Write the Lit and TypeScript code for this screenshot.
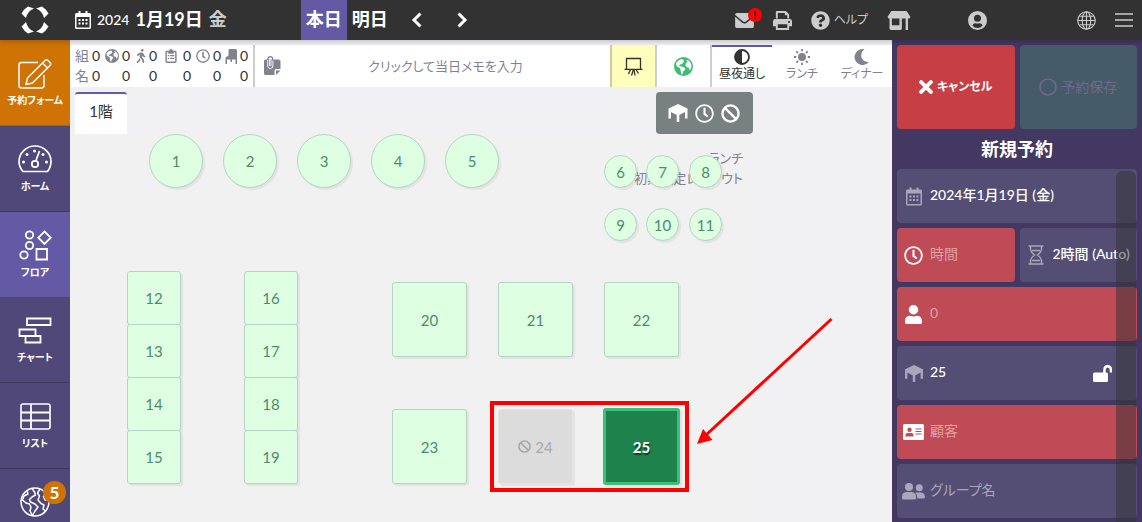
import { LitElement, html, css, svg, TemplateResult } from "lit";
import { customElement, property } from "lit/decorators.js";
import { classMap } from "lit/directives/class-map.js";
import { styleMap } from "lit/directives/style-map.js";

type Icon = { box: string; art: unknown };

const clockPath = "M256 8C119 8 8 119 8 256s111 248 248 248 248-111 248-248S393 8 256 8zm0 448c-110.500 0-200-89.500-200-200S145.500 56 256 56s200 89.500 200 200-89.500 200-200 200zm61.800-104.400l-84.900-61.700c-3.100-2.300-4.900-5.900-4.900-9.700V116c0-6.600 5.400-12 12-12h32c6.600 0 12 5.400 12 12v141.700l66.800 48.600c5.400 3.900 6.500 11.400 2.600 16.800L334.600 349c-3.900 5.300-11.400 6.500-16.800 2.600z";

const icons: Record<string, Icon> = {
  logo: {
    box: "0 0 28 28",
    art: svg`<g fill="currentColor">
      <path d="M7 .5 13 2.500Q6.500 5 5 12L.5 7.500Q3 3 7 .5z"/>
      <path d="M21 .5 15 2.500Q21.500 5 23 12L27.500 7.500Q25 3 21 .5z"/>
      <path d="M7 27.500 13 25.500Q6.500 23 5 16L.5 20.500Q3 25 7 27.500z"/>
      <path d="M21 27.500 15 25.500Q21.500 23 23 16L27.500 20.500Q25 25 21 27.500z"/></g>`,
  },
  calendar: {
    box: "0 0 16 18",
    art: svg`<path d="M3.500 0h2v2h5V0h2v2H14.500Q16 2 16 3.500V16.500Q16 18 14.500 18H1.500Q0 18 0 16.500V3.500Q0 2 1.500 2H3.500zM1.500 6V16.500H14.500V6z" fill="currentColor" fill-rule="evenodd"/>
      <path d="M3.500 8h2v2h-2zM7 8h2v2h-2zM10.500 8h2v2h-2zM3.500 11.500h2v2h-2zM7 11.500h2v2h-2zM10.500 11.500h2v2h-2z" fill="currentColor"/>`,
  },
  left: { box: "0 0 12 16", art: svg`<path d="M9.500 1.500 3 8l6.500 6.500" fill="none" stroke="currentColor" stroke-width="3"/>` },
  right: { box: "0 0 12 16", art: svg`<path d="M2.500 1.500 9 8l-6.500 6.500" fill="none" stroke="currentColor" stroke-width="3"/>` },
  mail: {
    box: "0 0 20 16",
    art: svg`<path d="M2 0H18Q20 0 20 2L11.500 9Q10 10 8.500 9L0 2Q0 0 2 0zM0 4 7.500 10.500Q10 12.200 12.500 10.500L20 4V14Q20 16 18 16H2Q0 16 0 14z" fill="currentColor"/>`,
  },
  print: {
    box: "0 0 20 20",
    art: svg`<path d="M3 8V1.500Q3 0 4.500 0H13.500L17 3.500V8H15V4.500H12.500V2H5V8z" fill="currentColor"/>
      <path d="M2.500 8.500H17.500Q20 8.500 20 11V16H17V20H3V16H0V11Q0 8.500 2.500 8.500zM5 14V18H15V14zM16 10.500v2h1.800v-2z" fill="currentColor" fill-rule="evenodd"/>`,
  },
  help: {
    box: "0 0 512 512",
    art: svg`<path fill="currentColor" d="M504 256c0 136.997-111.043 248-248 248S8 392.997 8 256C8 119.083 119.043 8 256 8s248 111.083 248 248zM262.655 90c-54.497 0-89.255 22.957-116.549 63.758-3.536 5.286-2.353 12.415 2.715 16.258l34.699 26.310c5.205 3.947 12.621 3.008 16.665-2.122 17.864-22.658 30.113-35.797 57.303-35.797 20.429 0 45.698 13.148 45.698 32.958 0 14.976-12.363 22.667-32.534 33.976C247.128 238.528 216 254.941 216 296v4c0 6.627 5.373 12 12 12h56c6.627 0 12-5.373 12-12v-1.333c0-28.462 83.186-29.647 83.186-106.667 0-58.002-60.165-102-116.531-102zM256 338c-25.365 0-46 20.635-46 46 0 25.364 20.635 46 46 46s46-20.636 46-46c0-25.365-20.635-46-46-46z"/>`,
  },
  store: {
    box: "0 0 24 20",
    art: svg`<path d="M4 0H20L24 6Q24 8 22 8H2Q0 8 0 6zM2 8H4.500V15H12.500V8H15V18.500Q15 20 13.500 20H3.500Q2 20 2 18.500zM19 8H21.500V20H19z" fill="currentColor"/>`,
  },
  account: {
    box: "0 0 20 20",
    art: svg`<path d="M10 0A10 10 0 1 1 10 20A10 10 0 0 1 10 0zM10 4A3.700 3.700 0 1 0 10 11.400A3.700 3.700 0 0 0 10 4zM4.500 15.200Q7 18 10 18T15.500 15.200Q14 12.500 12 12.800 10 13.700 8 12.800 6 12.500 4.500 15.200z" fill="currentColor" fill-rule="evenodd"/>`,
  },
  world: {
    box: "0 0 20 20",
    art: svg`<g fill="none" stroke="currentColor" stroke-width="1.200"><circle cx="10" cy="10" r="9.200"/><ellipse cx="10" cy="10" rx="4.500" ry="9.200"/><path d="M10 1V19M1 10H19M2.500 5.500H17.500M2.500 14.500H17.500"/></g>`,
  },
  menu: { box: "0 0 18 16", art: svg`<path d="M0 2H18M0 8H18M0 14H18" stroke="currentColor" stroke-width="1.600"/>` },
  globe: {
    box: "0 0 20 20",
    art: svg`<path fill="currentColor" fill-rule="evenodd" d="M10 0A10 10 0 1 1 10 20A10 10 0 0 1 10 0zM2 6.500 3 10 6.500 11.500 7 15 8 18.300 9 18 9.500 15.500 12 13 11 11 8 10 5.500 9.500 6 8 8 7.500 10.500 5 10 3 8 2 5 3.500zM12.500 3.500 14.500 5 12.500 6.500 12 9 14 11 16 11.500 16 14 17.500 13 18.500 10 18 7 15.500 3.500z"/>`,
  },
  walk: {
    box: "0 0 320 512",
    art: svg`<path fill="currentColor" d="M208 96c26.500 0 48-21.500 48-48S234.500 0 208 0s-48 21.500-48 48 21.500 48 48 48zm94.500 149.100l-23.300-11.800-9.700-29.400c-14.700-44.600-55.700-75.800-102.200-75.900-36-.1-55.900 10.100-93.300 25.200-21.600 8.700-39.300 25.200-49.700 46.200L17.600 213c-7.800 15.800-1.500 35 14.200 42.900 15.600 7.900 34.600 1.500 42.500-14.300L81 228c3.500-7 9.300-12.500 16.500-15.400l26.800-10.800-15.200 60.700c-5.200 20.800.4 42.900 14.900 58.800l59.900 65.400c7.200 7.900 12.300 17.400 14.900 27.700l18.300 73.300c4.300 17.100 21.700 27.600 38.800 23.300 17.100-4.300 27.600-21.700 23.300-38.800l-22.200-89c-2.600-10.300-7.700-19.900-14.900-27.700l-45.500-49.700 17.200-68.700 5.500 16.500c5.300 16.100 16.700 29.400 31.700 37l23.300 11.800c15.600 7.900 34.600 1.500 42.500-14.300 7.700-15.700 1.400-35.100-14.300-43zM73.600 385.800c-3.200 8.100-8 15.400-14.200 21.500l-50 50.100c-12.500 12.500-12.500 32.800 0 45.300s32.700 12.500 45.200 0l59.400-59.400c6.100-6.100 10.900-13.400 14.200-21.500l13.500-33.800c-55.300-60.300-38.700-41.800-47.400-53.700l-20.700 51.500z"/>`,
  },
  clipboard: {
    box: "0 0 12 15",
    art: svg`<path d="M1.500 2H4Q4 0 6 0T8 2H10.500Q12 2 12 3.500V13.500Q12 15 10.500 15H1.500Q0 15 0 13.500V3.500Q0 2 1.500 2zM1.500 3.500V13.500H10.500V3.500H9V5H3V3.500z" fill="currentColor" fill-rule="evenodd"/><path d="M2.500 6.500h1.500v1.300h-1.500zM5 6.500h4.500v1.300h-4.500zM2.500 9.500h1.500v1.300h-1.500zM5 9.500h4.500v1.300h-4.500z" fill="currentColor"/>`,
  },
  clock: { box: "0 0 512 512", art: svg`<path fill="currentColor" d="${clockPath}"/>` },
  chair: {
    box: "0 0 12 15",
    art: svg`<path d="M4.500 0H10.500Q12 0 12 1.500V15H10.500V10.500H7V13H5.500V10.500H2V15H.5V8.500L3.500 6.500V1Q3.500 0 4.500 0z" fill="currentColor"/>`,
  },
  memo: {
    box: "0 0 17 20",
    art: svg`<path d="M1.500 3.500H14.500Q16.500 3.500 16.500 5V13H12Q10.500 13 10.500 14.500V19H1.500Q0 19 0 17.500V5Q0 3.500 1.500 3.500zM12 14.500H16.500L12 19z" fill="currentColor"/>
      <path d="M4 4V3Q4 .7 6.300 .7T8.600 3V4" fill="none" stroke="currentColor" stroke-width="1.300"/>
      <path d="M3.700 4V10Q3.700 12.500 6.300 12.500T8.900 10V4.500M5.600 10V4Q5.600 3 6.300 3T7 4V10" fill="none" stroke="#fff" stroke-width=".9"/>`,
  },
  board: {
    box: "0 0 19 19",
    art: svg`<path d="M2.500 12V1.500H16.500V12M.5 12.300H18.500M6.500 12.500 4.500 17M9.500 12.500 7.500 18.500M10 12.500 11 18.500M12 12.500 14.500 16.500" fill="none" stroke="currentColor" stroke-width="1.300"/>`,
  },
  adjust: {
    box: "0 0 16 16",
    art: svg`<circle cx="8" cy="8" r="7" fill="none" stroke="currentColor" stroke-width="1.800"/><path d="M8 1A7 7 0 0 0 8 15z" fill="currentColor"/>`,
  },
  sun: {
    box: "0 0 16 16",
    art: svg`<circle cx="8" cy="8" r="4" fill="currentColor"/><path d="M8 0V2.200M8 13.800V16M0 8H2.200M13.800 8H16M2.300 2.300 4 4M12 12 13.700 13.700M2.300 13.700 4 12M12 4 13.700 2.300" stroke="currentColor" stroke-width="1.800"/>`,
  },
  moon: {
    box: "0 0 16 16",
    art: svg`<path d="M10.500 .3A8 8 0 1 0 15 12.800Q9.500 13.500 7.500 8.500 6.500 3 10.500 .3z" fill="currentColor"/>`,
  },
  table: {
    box: "0 0 20 18",
    art: svg`<path d="M10 0 19.500 4.500V14.500H17V8L11.300 11V18H8.700V11L3 8V14.500H.5V4.500z" fill="currentColor"/>`,
  },
  ban: {
    box: "0 0 20 20",
    art: svg`<circle cx="10" cy="10" r="8.500" fill="none" stroke="currentColor" stroke-width="2.500"/><path d="M4 4 16 16" stroke="currentColor" stroke-width="2.500"/>`,
  },
  times: {
    box: "0 80 352 352",
    art: svg`<path fill="currentColor" d="M242.720 256l100.070-100.070c12.280-12.280 12.280-32.190 0-44.480l-22.240-22.240c-12.280-12.280-32.190-12.280-44.480 0L176 189.280 75.930 89.210c-12.280-12.280-32.190-12.280-44.480 0L9.210 111.450c-12.280 12.280-12.280 32.190 0 44.480L109.280 256 9.210 356.070c-12.280 12.280-12.280 32.190 0 44.480l22.240 22.240c12.280 12.280 32.200 12.280 44.480 0L176 322.720l100.070 100.070c12.280 12.280 32.200 12.280 44.480 0l22.240-22.240c12.280-12.280 12.280-32.190 0-44.480L242.720 256z"/>`,
  },
  ring: { box: "0 0 18 18", art: svg`<circle cx="9" cy="9" r="8" fill="none" stroke="currentColor" stroke-width="1.600"/>` },
  hourglass: {
    box: "0 0 16 20",
    art: svg`<path d="M.5 1H15.500M.5 19H15.500M2.500 1V4.500Q3 7.500 6.500 10 3 12.500 2.500 15.500V19M13.500 1V4.500Q13 7.500 9.500 10 13 12.500 13.500 15.500V19M4 5.500H12M4 15.500H12" fill="none" stroke="currentColor" stroke-width="1.500"/>`,
  },
  user: {
    box: "0 0 16 18",
    art: svg`<circle cx="8" cy="4.500" r="4.500" fill="currentColor"/><path d="M4.500 10.200Q8 11.500 11.500 10.200 16 10.500 16 15V16.500Q16 18 14.500 18H1.500Q0 18 0 16.500V15Q0 10.500 4.500 10.200z" fill="currentColor"/>`,
  },
  unlock: {
    box: "0 0 19 17",
    art: svg`<path d="M1.500 7.500H10.200V5Q10.200 0 14.700 0T19 5V7.500H16.700V5Q16.700 2.500 14.700 2.500T12.700 5V7.500H13.500Q15 7.500 15 9V15.500Q15 17 13.500 17H1.500Q0 17 0 15.500V9Q0 7.500 1.500 7.500z" fill="currentColor"/>`,
  },
  card: {
    box: "0 0 21 16",
    art: svg`<path d="M1.500 0H19.500Q21 0 21 1.500V14.500Q21 16 19.500 16H1.500Q0 16 0 14.500V1.500Q0 0 1.500 0zM6.500 3.500A2.200 2.200 0 1 0 6.500 7.900A2.200 2.200 0 0 0 6.500 3.500zM2.500 12.500H10.500V11Q10.500 9 8.500 9H4.500Q2.500 9 2.500 11zM12.500 4.500V5.500H18.500V4.500zM12.500 7V8H18.500V7zM12.500 9.500V10.500H18.500V9.500z" fill="currentColor" fill-rule="evenodd"/>`,
  },
  users: {
    box: "0 0 23 17",
    art: svg`<circle cx="7" cy="4" r="4" fill="currentColor"/><circle cx="17.300" cy="4.700" r="3.500" fill="currentColor"/><path d="M4 9H10Q14 9.500 14 13.500V15.500Q14 16.500 13 16.500H1Q0 16.500 0 15.500V13.500Q0 9.500 4 9zM14 9.500H19Q23 10 23 14.500L22 15.500H15.300Q15.500 11.500 13.500 10z" fill="currentColor"/>`,
  },
  edit: {
    box: "0 0 34 31",
    art: svg`<g fill="none" stroke="currentColor" stroke-width="1.500" stroke-linejoin="round"><path d="M20 4.500H3.500Q1 4.500 1 7V27.500Q1 30 3.500 30H23.500Q26 30 26 27.500V17"/><path d="M9.500 20 27 2.500Q28.500 1 30 2.500L32 4.500Q33.500 6 32 7.500L14.500 25 8 26.500zM24.500 5 29.500 10"/></g>`,
  },
  gauge: {
    box: "0 0 34 28",
    art: svg`<path d="M5 26.500Q1 22 1 16.500A16 15.500 0 0 1 33 16.500Q33 22 29.500 26.500z" fill="none" stroke="currentColor" stroke-width="1.700"/><circle cx="17" cy="19" r="3.200" fill="none" stroke="currentColor" stroke-width="1.800"/><path d="M18 15.500 21.500 6" stroke="currentColor" stroke-width="1.700"/><g fill="currentColor"><circle cx="5.500" cy="17" r="1.500"/><circle cx="9" cy="9.500" r="1.500"/><circle cx="16.500" cy="6" r="1.500"/><circle cx="25" cy="9.500" r="1.500"/><circle cx="28.500" cy="17" r="1.500"/></g>`,
  },
  floor: {
    box: "0 0 33 31",
    art: svg`<g fill="none" stroke="currentColor" stroke-width="1.800"><circle cx="10.500" cy="5" r="3.700"/><circle cx="10.500" cy="15.500" r="3.700"/><circle cx="5" cy="25" r="3.700"/><path d="M25.500 1.500 31.700 7.700 25.500 13.900 19.300 7.700zM17.500 19H28V29.500H17.500z"/></g>`,
  },
  chart: {
    box: "0 0 34 27",
    art: svg`<path d="M9 1.500H32.500V8H9zM1.500 12.500H17.500V19H1.500zM7.500 19H22.500V25.500H7.500z" fill="none" stroke="currentColor" stroke-width="1.800"/>`,
  },
  list: {
    box: "0 0 31 27",
    art: svg`<rect x="1" y="1" width="29" height="25" rx="2" fill="none" stroke="currentColor" stroke-width="1.600"/><path d="M1 9.500H30M1 17.500H30M11 1V26" stroke="currentColor" stroke-width="1.800"/>`,
  },
  earth: {
    box: "0 0 30 30",
    art: svg`<g fill="none" stroke="currentColor" stroke-width="1.500" stroke-linejoin="round"><circle cx="15" cy="15" r="14"/><path d="M7 4 8 7 4 9 2.500 13 6 16 9.500 17 11 20 10 24 12.500 28.500 15 24 18 20 15 17 10.500 15 9.500 12.500 12 10 15.500 8 14.500 5 12 1.500M20 2 17.500 6 19.500 9 18 13 21 16.500 24 18 23 22 25.500 24M26 6.500 23.500 9.500 25 13 28.500 13"/></g>`,
  },
};

const icon = (name: string, width: number, height = width): TemplateResult =>
  html`<svg width=${width} height=${height} viewBox=${icons[name].box} aria-hidden="true">${icons[name].art}</svg>`;

const shared = css`
  * { box-sizing: border-box; }
  svg { display: block; flex: none; }
  button, input {
    font: inherit; color: inherit; background: none; border: 0; padding: 0; margin: 0;
    font-feature-settings: inherit; min-width: 0;
  }
  button { cursor: pointer; }
  a { color: inherit; text-decoration: none; }
`;

@customElement("top-bar")
class TopBar extends LitElement {
  static styles = [shared, css`
    :host {
      display: flex; align-items: stretch; height: 40px; background: #323232; color: #fff; padding-right: 9px;
      box-shadow: 0 1px 6px rgba(0, 0, 0, 0.25); position: relative; z-index: 2;
    }
    .group { display: flex; align-items: center; }
    .logo { width: 70px; justify-content: center; }
    .date { gap: 6px; padding-left: 5px; }
    .year { font-size: 14px; font-weight: 500; }
    .day { font-size: 18px; font-weight: 700; }
    .week { font-size: 18px; font-weight: 700; color: #ccc; }
    .jump { font-size: 18px; font-weight: 700; width: 46px; font-feature-settings: normal; }
    .jump.on { background: #6459a5; }
    .days { margin-left: 74px; align-items: stretch; }
    .arrow { width: 45px; display: grid; place-items: center; }
    .arrows { margin-left: 2px; }
    .tools { margin-left: auto; color: #ccc; gap: 19px; }
    .mail { position: relative; }
    .alert {
      position: absolute; right: -8px; top: -5px; width: 14px; height: 14px; border-radius: 50%;
      background: #f00; color: #323232; font-size: 12px; font-weight: 900; line-height: 14px; text-align: center;
    }
    .help { gap: 4px; font-size: 12px; }
    .account { margin-left: 38px; }
    .world { margin-left: 71px; }
  `];

  render() {
    return html`
      <a class="group logo" href="#" aria-label="トップ">${icon("logo", 28)}</a>
      <button class="group date">
        ${icon("calendar", 16, 18)}
        <span class="year">2024</span><span class="day">1月19日</span><span class="week">金</span>
      </button>
      <div class="group days">
        <button class="jump on">本日</button><button class="jump">明日</button>
      </div>
      <div class="group arrows">
        <button class="arrow" aria-label="前日">${icon("left", 12, 16)}</button>
        <button class="arrow" aria-label="翌日">${icon("right", 12, 16)}</button>
      </div>
      <div class="group tools">
        <button class="mail" aria-label="メール">${icon("mail", 19, 15)}<span class="alert">!</span></button>
        <button aria-label="印刷">${icon("print", 19)}</button>
        <button class="group help">${icon("help", 19)}<span>ヘルプ</span></button>
        <button aria-label="店舗">${icon("store", 24, 19)}</button>
        <button class="account" aria-label="アカウント">${icon("account", 19)}</button>
        <button class="world" aria-label="言語">${icon("world", 19)}</button>
        <button class="menu" aria-label="メニュー">${icon("menu", 18, 16)}</button>
      </div>`;
  }
}

@customElement("side-nav")
class SideNav extends LitElement {
  static styles = [shared, css`
    :host { display: block; background: #504878; color: #fff; overflow: hidden; }
    .item {
      display: flex; flex-direction: column; align-items: center; height: 86px; padding-top: 15px;
      border-bottom: 1px solid #403860; font-size: 10px; line-height: 18px; font-weight: 700;
      position: relative;
    }
    .art { height: 36px; display: flex; align-items: center; }
    .form { background: #cf7305; border-bottom-color: #b06010; }
    .on { background: #6459a5; height: 85px; border-bottom: 0; }
    .badge {
      position: absolute; left: 43px; top: 12px; width: 23px; height: 23px; border-radius: 50%;
      background: #cf7305; font-size: 17px; line-height: 23px; text-align: center;
    }
  `];

  render() {
    const items = [
      { name: "予約フォーム", art: icon("edit", 34, 31), kind: "form" },
      { name: "ホーム", art: icon("gauge", 34, 28), kind: "" },
      { name: "フロア", art: icon("floor", 33, 31), kind: "on" },
      { name: "チャート", art: icon("chart", 34, 27), kind: "" },
      { name: "リスト", art: icon("list", 31, 27), kind: "" },
    ];
    return html`<nav>
      ${items.map((i) => html`<a href="#" class="item ${i.kind}"><span class="art">${i.art}</span>${i.name}</a>`)}
      <a href="#" class="item" aria-label="ネット予約"><span class="art">${icon("earth", 30)}</span><span class="badge">5</span></a>
    </nav>`;
  }
}

@customElement("day-bar")
class DayBar extends LitElement {
  static styles = [shared, css`
    :host { display: flex; height: 42px; background: #fff; color: #323232; }
    table { border-collapse: collapse; table-layout: fixed; width: 178px; margin: 1px 0; }
    th, td { padding: 0; height: 20px; text-align: right; font-size: 14px; line-height: 20px; font-weight: 400; }
    .first { width: 30px; }
    .narrow { width: 27px; }
    .wide { width: 34px; }
    .cell { display: flex; justify-content: flex-end; align-items: center; gap: 3px; }
    .wide .cell { gap: 6px; }
    .cell svg, .unit { color: #82828f; }
    .memo {
      flex: 1; display: flex; align-items: center; padding-left: 9px; margin-left: 5px;
      border-left: 2px solid #ccccd2; color: #82828f; min-width: 0;
    }
    .memo input { flex: 1; text-align: center; font-size: 13px; outline: 0; }
    .memo input::placeholder { color: #82828f; opacity: 1; }
    .board { width: 47px; display: grid; place-items: center; background: #ffffbb; border: solid #cccca0; border-width: 0 2px; border-right-color: #ccccd2; }
    .net { width: 55px; display: grid; place-items: center; color: #3cbc74; border-right: 2px solid #ccccd2; }
    .shift {
      width: 60px; display: flex; flex-direction: column; align-items: center; gap: 1px;
      border-top: 2px solid transparent; padding-top: 2px; font-size: 12px; line-height: 16px; color: #82828f;
    }
    .on { border-top-color: #6459a5; color: #323232; }
  `];

  render() {
    const cols = [icon("globe", 14), icon("walk", 10, 14), icon("clipboard", 12, 14), icon("clock", 14), icon("chair", 12, 15)];
    const kinds = ["first", "narrow", "wide", "first", "narrow"];
    return html`
      <table>
        <tr>
          <th class="first"><span class="cell"><span class="unit">組</span>0</span></th>
          ${cols.map((c, i) => html`<td class=${kinds[i]}><span class="cell">${c}0</span></td>`)}
        </tr>
        <tr>
          <th><span class="cell"><span class="unit">名</span>0</span></th>
          ${cols.map(() => html`<td>0</td>`)}
        </tr>
      </table>
      <label class="memo">${icon("memo", 17, 20)}
        <input aria-label="当日メモ" placeholder="クリックして当日メモを入力" />
      </label>
      <button class="board" aria-label="ボード">${icon("board", 19)}</button>
      <button class="net" aria-label="ネット">${icon("globe", 19)}</button>
      <button class="shift on">${icon("adjust", 16)}昼夜通し</button>
      <button class="shift">${icon("sun", 16)}ランチ</button>
      <button class="shift">${icon("moon", 16)}ディナー</button>`;
  }
}

type Seat = { no: number; x: number; y: number; size: number; shape: "round" | "box"; state?: "blocked" | "picked" };

const seats: Seat[] = [
  ...[1, 2, 3, 4, 5].map((no, i): Seat => ({ no, x: 79 + i * 74, y: 0, size: 54, shape: "round" })),
  ...[6, 7, 8, 9, 10, 11].map((no, i): Seat => ({
    no, x: [534, 576, 619][i % 3], y: i < 3 ? 21 : 74, size: 33, shape: "round",
  })),
  ...[12, 13, 14, 15, 16, 17, 18, 19].map((no, i): Seat => ({
    no, x: i < 4 ? 57 : 174, y: 137 + (i % 4) * 53, size: 54, shape: "box",
  })),
  ...[20, 21, 22].map((no, i): Seat => ({ no, x: 322 + i * 106, y: 148, size: 75, shape: "box" })),
  { no: 23, x: 322, y: 275, size: 75, shape: "box" },
  { no: 24, x: 428, y: 275, size: 75, shape: "box", state: "blocked" },
  { no: 25, x: 533, y: 274, size: 77, shape: "box", state: "picked" },
];

@customElement("floor-map")
class FloorMap extends LitElement {
  static styles = [shared, css`
    :host { display: flex; flex-direction: column; flex: 1; min-height: 0; }
    .head { display: flex; justify-content: space-between; padding: 5px 139px 0 5px; }
    .tab {
      width: 52px; height: 42px; background: #fff; border-top: 2px solid #6459a5; border-radius: 3px 3px 0 0;
      padding-bottom: 4px; font-size: 15px; color: #323232;
    }
    .legend {
      display: flex; align-items: center; gap: 7px; padding: 0 13px 0 12px; height: 42px; border-radius: 4px;
      background: #788080; color: #fff;
    }
    .map { position: relative; flex: 1; background: linear-gradient(#f1f1f1, #f1f1f1) no-repeat; background-size: 683px 100%; overflow: hidden; }
    .note { margin: 0; padding: 14px 149px 0 0; text-align: right; font-size: 13px; line-height: 20px; color: #82828f; }
    .seat {
      position: absolute; display: flex; align-items: center; justify-content: center; gap: 4px;
      background: #dfffe2; border: 1px solid #b4d5c3; border-radius: 3px; color: #4d8c6b;
      font-size: 15px; line-height: 20px; box-shadow: 2px 2px 1px rgba(0, 0, 0, 0.06);
    }
    .round { border-radius: 50%; }
    .blocked { background: #dcdcdc; border-color: #e4e4e4; color: #a8a8a8; }
    .picked {
      background: #1d824c; border: 3px solid #3dbf79; color: #fff; font-weight: 700;
      text-shadow: 1px 2px 1px rgba(0, 0, 0, 0.5);
    }
    .frame { position: absolute; left: 420px; top: 267px; width: 199px; height: 91px; border: 4px solid #f00; pointer-events: none; }
    .pointer { position: absolute; left: 626px; top: 183px; pointer-events: none; }
  `];

  render() {
    return html`
      <div class="head">
        <button class="tab">1階</button>
        <div class="legend">${icon("table", 20, 18)}${icon("clock", 19)}${icon("ban", 19)}</div>
      </div>
      <div class="map">
        <p class="note">ランチ<br />初期設定レイアウト</p>
        ${seats.map((s) => html`<button
          class="seat ${classMap({ round: s.shape === "round", blocked: s.state === "blocked", picked: s.state === "picked" })}"
          style=${styleMap({ left: `${s.x}px`, top: `${s.y}px`, width: `${s.size}px`, height: `${s.size}px` })}
        >${s.state === "blocked" ? icon("ban", 13) : ""}${s.no}</button>`)}
        <div class="frame"></div>
        <svg class="pointer" width="138" height="128" viewBox="0 0 138 128" aria-hidden="true">
          <path d="M10 118 135.500 2" stroke="#f00" stroke-width="3" />
          <path d="M1 127 7 112 16.500 123z" fill="#f00" />
        </svg>
      </div>`;
  }
}

@customElement("form-field")
class FormField extends LitElement {
  @property() icon = "";
  @property() label = "";
  @property() value = "";
  @property() hint = "";
  @property({ type: Number }) w = 18;
  @property({ type: Number }) h = 18;
  @property({ type: Boolean }) required = false;
  @property({ type: Boolean }) lock = false;

  static styles = [shared, css`
    :host { display: block; min-width: 0; }
    .field {
      display: grid; grid-template-columns: 33px 1fr auto; align-items: center; height: 54px;
      border-radius: 4px; background: #544e75; color: #fff; overflow: hidden;
    }
    .required { background: #be4b56; }
    .pic { display: grid; place-items: center; color: #aaa6bb; }
    .required .pic { color: #fff; }
    input { width: 100%; height: 24px; padding-bottom: 4px; font-size: 14px; font-weight: 500; outline: 0; }
    input::placeholder { color: #aaa6bb; opacity: 1; font-weight: 400; }
    .required input::placeholder { color: #e2a0a5; }
    .lock { margin-right: 25px; }
  `];

  render() {
    return html`<div class="field ${classMap({ required: this.required })}">
      <label class="pic" for="box" aria-label=${this.label}>${icon(this.icon, this.w, this.h)}</label>
      <input id="box" .value=${this.value} placeholder=${this.hint} />
      ${this.lock ? html`<button class="lock" aria-label="ロック解除">${icon("unlock", 19, 17)}</button>` : ""}
    </div>`;
  }
}

@customElement("booking-panel")
class BookingPanel extends LitElement {
  static styles = [shared, css`
    :host { display: flex; flex-direction: column; background: #433862; color: #fff; padding: 5px 5px 0; overflow: hidden; }
    .pair { display: grid; grid-template-columns: 1fr 1fr; gap: 5px; }
    .action {
      display: flex; align-items: center; justify-content: center; gap: 4px; height: 84px;
      border-radius: 4px; font-size: 14px; font-weight: 700;
    }
    .cancel { background: #c73e45; font-size: 12px; }
    .save { background: #455b69; color: #71688c; font-weight: 400; }
    h1 { margin: 0; font-size: 18px; line-height: 40px; font-weight: 700; text-align: center; }
    .fields { display: flex; flex-direction: column; gap: 5px; position: relative; flex: 1; min-height: 0; }
    .thumb { position: absolute; right: 1px; top: 2px; bottom: 0; width: 20px; border-radius: 6px 6px 0 0; background: rgba(50, 50, 50, 0.5); }
  `];

  render() {
    return html`
      <div class="pair">
        <button class="action cancel">${icon("times", 14)}キャンセル</button>
        <button class="action save" disabled>${icon("ring", 18)}予約保存</button>
      </div>
      <h1>新規予約</h1>
      <div class="fields">
        <form-field icon="calendar" w="16" h="19" label="日付" value="2024年1月19日 (金)"></form-field>
        <div class="pair">
          <form-field icon="clock" w="19" h="19" label="時間" hint="時間" required></form-field>
          <form-field icon="hourglass" w="16" h="20" label="滞在時間" value="2時間 (Auto)"></form-field>
        </div>
        <form-field icon="user" w="17" h="19" label="人数" hint="0" required></form-field>
        <form-field icon="table" w="20" h="17" label="テーブル" value="25" lock></form-field>
        <form-field icon="card" w="21" h="16" label="顧客" hint="顧客" required></form-field>
        <form-field icon="users" w="23" h="17" label="グループ名" hint="グループ名"></form-field>
        <div class="thumb"></div>
      </div>`;
  }
}

@customElement("app-root")
class AppRoot extends LitElement {
  static styles = [shared, css`
    :host {
      display: grid; grid-template-rows: auto minmax(0, 1fr); height: 100vh; background: #f1f1f4; overflow: hidden;
      font-family: Lato, "Noto Sans CJK JP", sans-serif; font-feature-settings: "palt"; line-height: 1.3;
    }
    .body { display: grid; grid-template-columns: 70px minmax(0, 1fr) 250px; min-height: 0; }
    main { display: flex; flex-direction: column; padding-top: 5px; min-height: 0; }
  `];

  render() {
    return html`
      <top-bar></top-bar>
      <div class="body">
        <side-nav></side-nav>
        <main><day-bar></day-bar><floor-map></floor-map></main>
        <booking-panel></booking-panel>
      </div>`;
  }
}
